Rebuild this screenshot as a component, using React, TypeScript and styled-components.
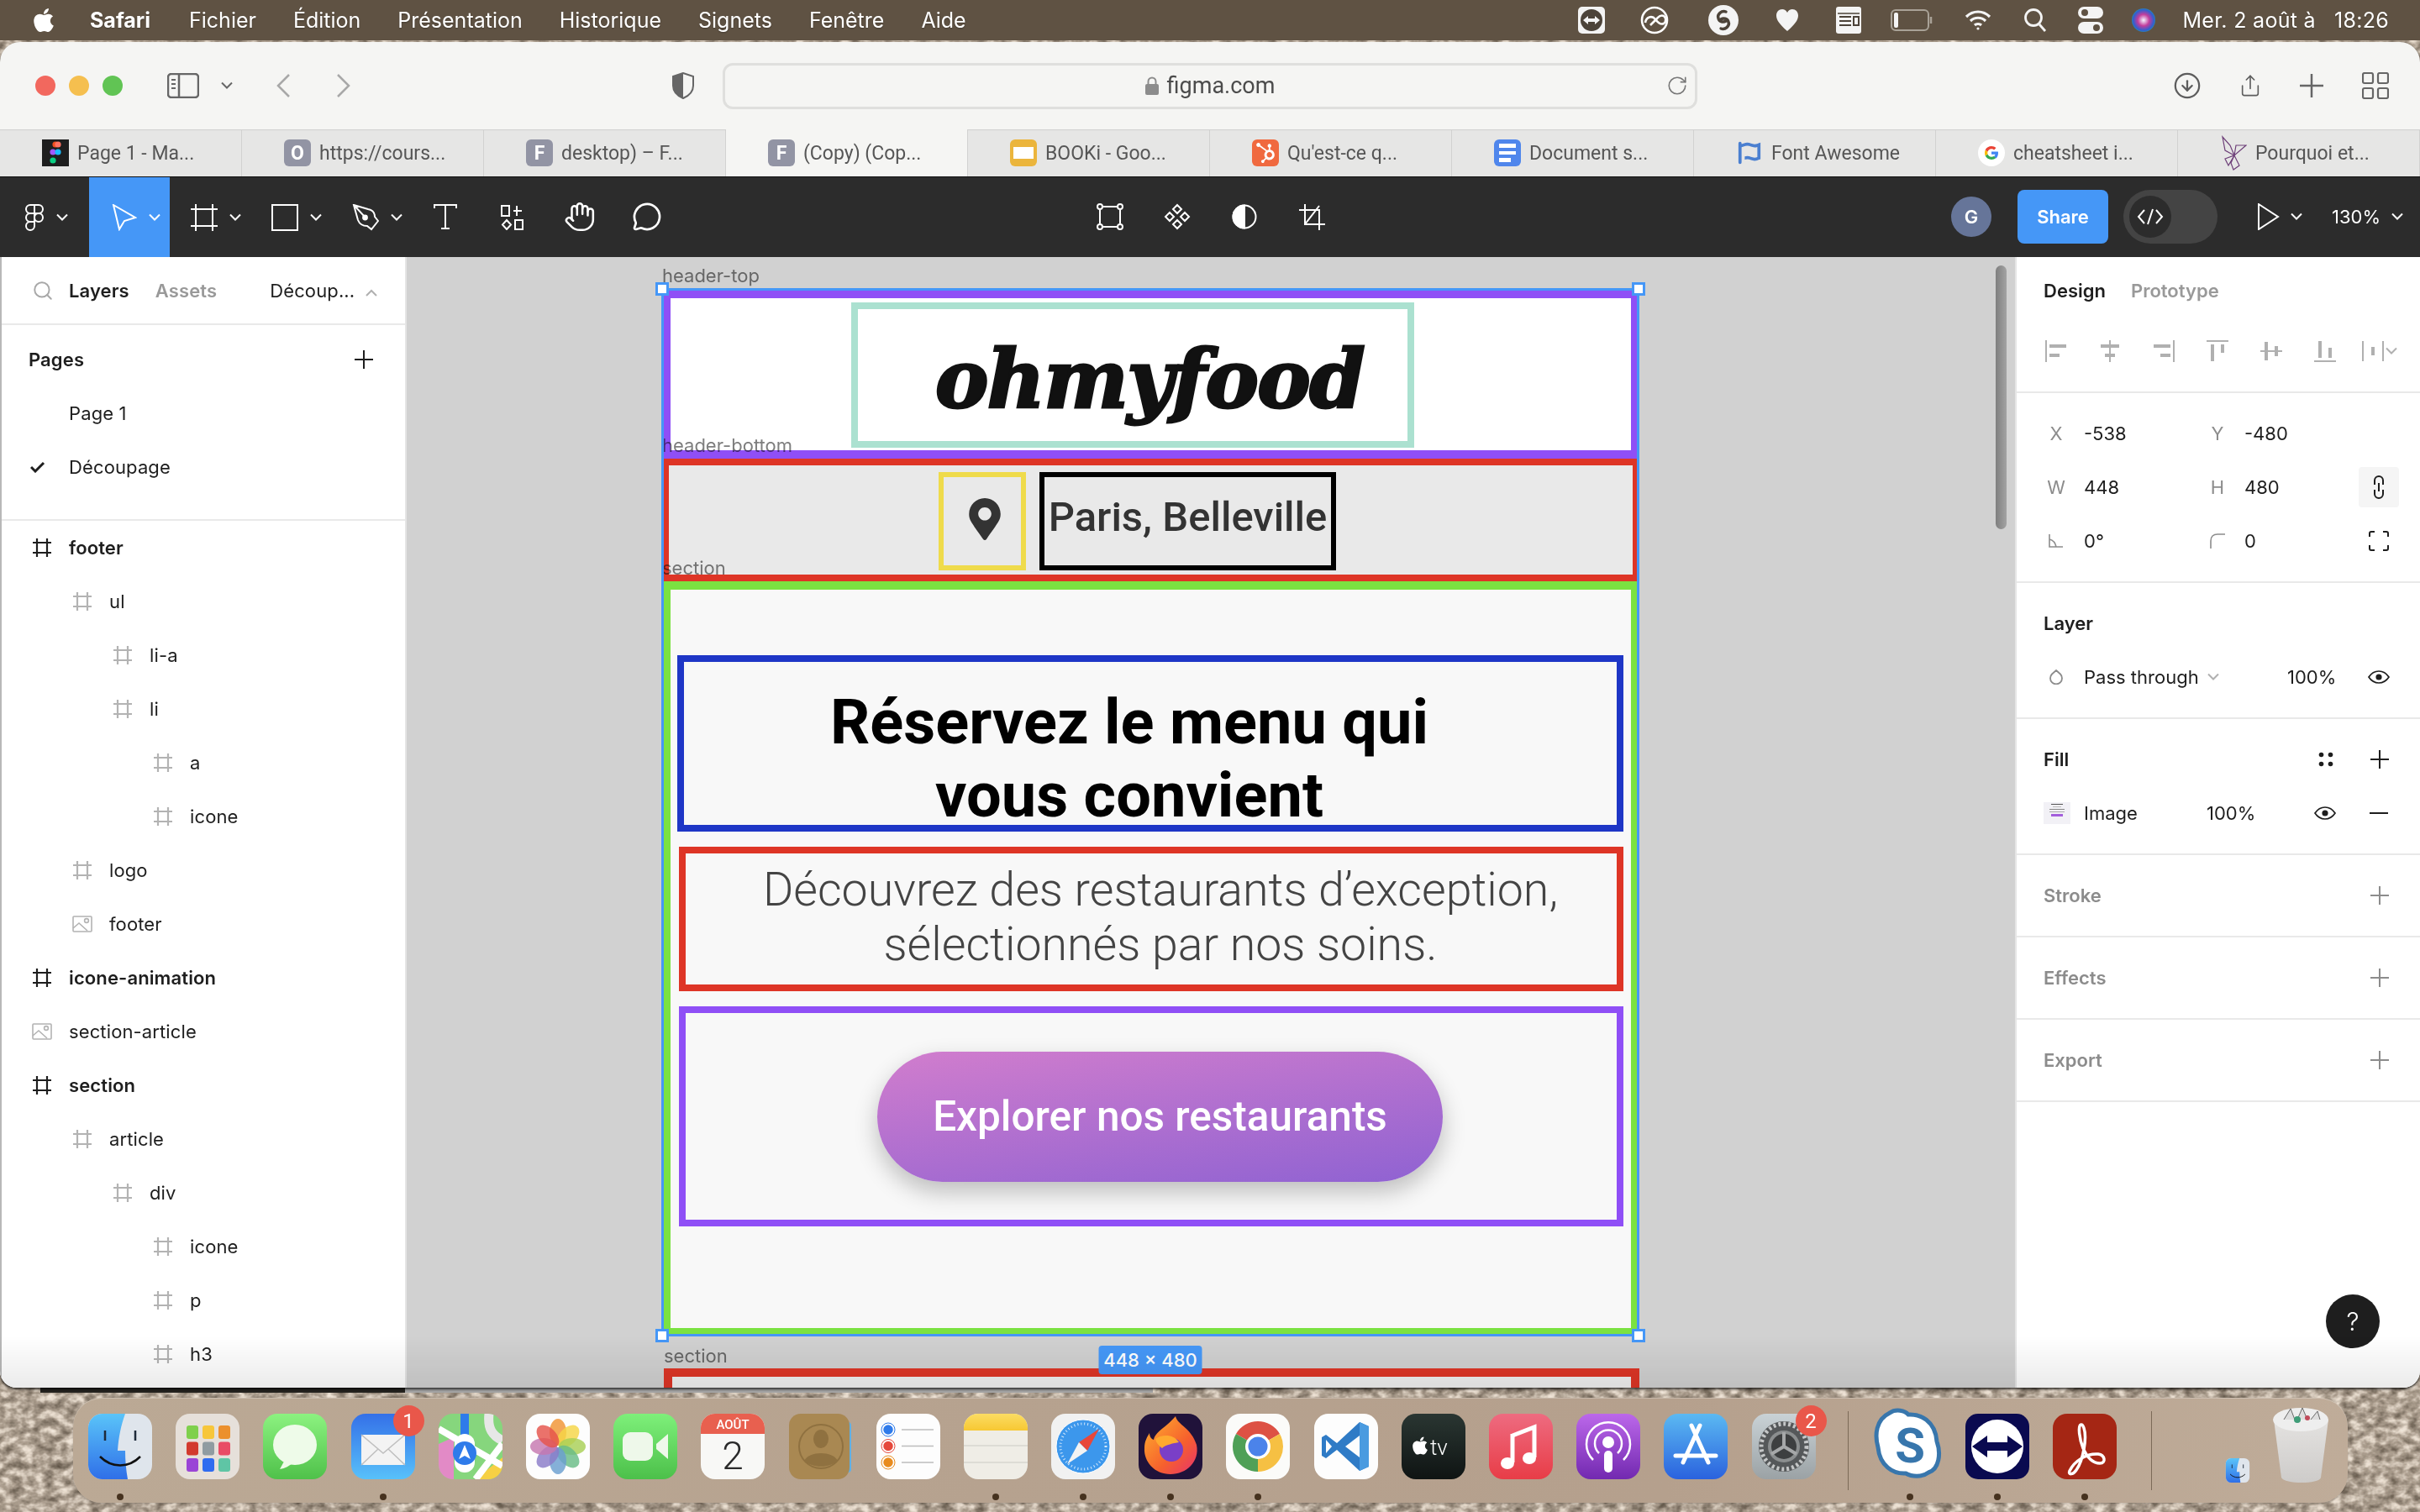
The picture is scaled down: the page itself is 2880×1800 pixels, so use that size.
import React from 'react';
import styled, { createGlobalStyle } from 'styled-components';
import { FaApple, FaFontAwesomeFlag, FaHubspot, FaMapMarkerAlt } from 'react-icons/fa';
import { CircleArrowDown, Hand, MessageCircle, RotateCw, Search, Share } from 'lucide-react';

const UI = `Inter, "Liberation Sans", sans-serif`;
const MAC = `Roboto, Inter, sans-serif`;

const GlobalStyle = createGlobalStyle`
  html, body { margin: 0; padding: 0; background: #8d7d6c; }
  * { box-sizing: border-box; }
`;

const Desktop = styled.div`
  position: relative;
  width: 2880px;
  height: 1800px;
  overflow: hidden;
  font-family: ${UI};
  display: flex;
  flex-direction: column;
`;

const Wallpaper = styled.svg`
  position: absolute;
  inset: 0;
`;

const BackWindow = styled.div`
  position: absolute;
  left: 48px;
  top: 1648px;
  width: 1324px;
  height: 10px;
  background: linear-gradient(90deg, #25231f 0 434px, #a4a4a4 434px);
`;

/* ---- menu bar ---- */
const MenuBar = styled.div`
  position: relative;
  height: 48px;
  flex: none;
  background: #5f5243;
  color: #fff;
  display: flex;
  align-items: center;
  padding: 0 37px 0 36px;
  font-family: ${UI};
  font-size: 25px;
  text-shadow: 0 1px 2px rgba(0, 0, 0, 0.3);
`;

const MenuItem = styled.span<{ $ml?: number; $bold?: boolean }>`
  margin-left: ${(p) => p.$ml ?? 44}px;
  font-weight: ${(p) => (p.$bold ? 700 : 400)};
  white-space: nowrap;
`;

const Clock = styled(MenuItem)`
  letter-spacing: 0.3px;
`;

const StatusItem = styled.span<{ $ml: number; $w: number }>`
  display: flex;
  align-items: center;
  justify-content: center;
  flex: none;
  width: ${(p) => p.$w}px;
  height: 48px;
  margin-left: ${(p) => p.$ml}px;
`;

const StatusGroup = styled.div`
  margin-left: auto;
  display: flex;
  align-items: center;
`;

/* ---- browser window ---- */
const Window = styled.div`
  position: relative;
  margin-top: 2px;
  height: 1602px;
  flex: none;
  border-radius: 24px 24px 20px 20px;
  overflow: hidden;
  background: #f5f5f3;
  display: flex;
  flex-direction: column;
  box-shadow: 0 2px 3px rgba(0, 0, 0, 0.7);
`;

const WindowFade = styled.div`
  position: absolute;
  left: 0;
  right: 0;
  bottom: 0;
  height: 62px;
  background: linear-gradient(rgba(0, 0, 0, 0), rgba(0, 0, 0, 0.08));
  pointer-events: none;
  z-index: 5;
`;

const SafariBar = styled.div`
  height: 104px;
  flex: none;
  display: flex;
  align-items: center;
  padding: 0 37px 0 42px;
`;

const Light = styled.span<{ $color: string; $ml?: number }>`
  width: 24px;
  height: 24px;
  border-radius: 50%;
  flex: none;
  margin-left: ${(p) => p.$ml ?? 0}px;
  background: ${(p) => p.$color};
`;

const BarIcon = styled.span<{ $ml: number; $w: number }>`
  display: flex;
  align-items: center;
  justify-content: center;
  flex: none;
  width: ${(p) => p.$w}px;
  margin-left: ${(p) => p.$ml}px;
  color: #5d5d5d;
`;

const UrlField = styled.div`
  position: relative;
  width: 1160px;
  height: 55px;
  margin-left: 34px;
  flex: none;
  border: 3px solid #dfdfdd;
  border-radius: 12px;
  display: flex;
  align-items: center;
  justify-content: center;
  gap: 10px;
  color: #4c4c4c;
  font-family: ${MAC};
  font-size: 27px;
`;

const Reload = styled.span`
  position: absolute;
  right: 8px;
  top: 11px;
  display: flex;
  color: #777;
`;

const TabStrip = styled.div`
  height: 56px;
  flex: none;
  display: flex;
  background: #e6e6e5;
  box-shadow: inset 0 2px 1px -1px #cfcfcf;
`;

const Tab = styled.div<{ $active?: boolean }>`
  width: 288px;
  flex: none;
  display: flex;
  align-items: center;
  padding-left: 50px;
  gap: 10px;
  border-right: 1px solid #d2d2d1;
  background: ${(p) => (p.$active ? '#f5f5f3' : 'transparent')};
  box-shadow: ${(p) => (p.$active ? '0 -2px 0 #f5f5f3' : 'none')};
  color: #565656;
  font-family: ${MAC};
  font-size: 23px;
  white-space: nowrap;
`;

const Favicon = styled.span<{ $bg: string; $color?: string }>`
  width: 32px;
  height: 32px;
  flex: none;
  border-radius: 6px;
  background: ${(p) => p.$bg};
  color: ${(p) => p.$color ?? '#fff'};
  display: flex;
  align-items: center;
  justify-content: center;
  font-family: ${MAC};
  font-weight: 700;
  font-size: 23px;
`;

/* ---- figma toolbar ---- */
const FigmaBar = styled.div`
  height: 96px;
  flex: none;
  background: #2c2c2c;
  border-top: 1px solid #111;
  padding-bottom: 1px;
  display: flex;
  align-items: stretch;
  color: #fff;
`;

const ToolMenu = styled.div<{ $active?: boolean; $w?: number; $gap?: number }>`
  width: ${(p) => p.$w ?? 96}px;
  flex: none;
  display: flex;
  align-items: center;
  padding-left: 25px;
  margin-bottom: -1px;
  gap: ${(p) => p.$gap ?? 14}px;
  background: ${(p) => (p.$active ? '#4597f7' : 'transparent')};
`;

const Tool = styled.div<{ $ml?: number }>`
  width: 80px;
  flex: none;
  display: flex;
  align-items: center;
  justify-content: center;
  margin-left: ${(p) => p.$ml ?? 0}px;
`;

const BarRight = styled.div`
  margin-left: auto;
  display: flex;
  align-items: center;
  padding-right: 20px;
`;

const Avatar = styled.span`
  width: 48px;
  height: 48px;
  border-radius: 50%;
  background: #667599;
  display: flex;
  align-items: center;
  justify-content: center;
  font-size: 22px;
  font-weight: 600;
`;

const ShareButton = styled.span`
  width: 108px;
  height: 64px;
  margin-left: 31px;
  border-radius: 8px;
  background: #4597f7;
  display: flex;
  align-items: center;
  justify-content: center;
  font-size: 22px;
  font-weight: 600;
`;

const CodeToggle = styled.span`
  width: 112px;
  height: 64px;
  margin-left: 18px;
  border-radius: 32px;
  background: #444;
  display: flex;
  align-items: center;
  padding-left: 7px;
`;

const CodeKnob = styled.span`
  width: 50px;
  height: 50px;
  border-radius: 50%;
  background: #2c2c2c;
  display: flex;
  align-items: center;
  justify-content: center;
`;

const ZoomText = styled.span`
  margin-left: 35px;
  margin-right: 13px;
  font-size: 22px;
`;

/* ---- figma panels ---- */
const Workspace = styled.div`
  flex: 1;
  display: flex;
  min-height: 0;
`;

const LeftPanel = styled.aside`
  width: 484px;
  flex: none;
  background: #fff;
  border-left: 2px solid #b8b8b8;
  border-right: 2px solid #e5e5e5;
  color: #1e1e1e;
  font-size: 22px;
  letter-spacing: 0.12px;
  overflow: hidden;
`;

const LeftTabs = styled.div`
  height: 81px;
  display: flex;
  align-items: center;
  padding-left: 36px;
  border-bottom: 2px solid #e9e9e9;
  font-weight: 600;
`;

const PanelTab = styled.span<{ $ml: number; $muted?: boolean; $thin?: boolean }>`
  margin-left: ${(p) => p.$ml}px;
  color: ${(p) => (p.$muted ? '#999' : '#1e1e1e')};
  font-weight: ${(p) => (p.$thin ? 400 : 600)};
  white-space: nowrap;
`;

const PagesBlock = styled.div`
  padding: 9px 0 30px;
  border-bottom: 2px solid #e9e9e9;
`;

const PagesTitle = styled.div`
  height: 64px;
  padding: 0 38px 0 32px;
  display: flex;
  align-items: center;
  justify-content: space-between;
  font-weight: 600;
`;

const PageRow = styled.div`
  height: 64px;
  padding-left: 34px;
  display: flex;
  align-items: center;
  gap: 28px;
`;

const CheckSlot = styled.span`
  width: 18px;
  display: flex;
`;

const LayerRow = styled.div<{ $depth: number; $strong?: boolean }>`
  height: 64px;
  padding-left: ${(p) => 36 + p.$depth * 48}px;
  display: flex;
  align-items: center;
  gap: 20px;
  font-weight: ${(p) => (p.$strong ? 600 : 400)};
  white-space: nowrap;
`;

const LayerIcon = styled.span`
  width: 24px;
  flex: none;
  display: flex;
  justify-content: center;
`;

const RightPanel = styled.aside`
  position: relative;
  flex: 1;
  background: #fff;
  border-left: 2px solid #e5e5e5;
  color: #1e1e1e;
  font-size: 22px;
`;

const RightTabs = styled.div`
  height: 80px;
  padding-left: 32px;
  display: flex;
  align-items: center;
  gap: 30px;
  font-weight: 600;
`;

const Section = styled.section<{ $pad?: boolean }>`
  padding: ${(p) => (p.$pad === false ? '0' : '16px 0')};
  border-bottom: 2px solid #e9e9e9;
`;

const AlignRow = styled.div`
  height: 64px;
  margin-top: -16px;
  padding-left: 15px;
  display: grid;
  grid-template-columns: repeat(7, 64px);
  align-items: center;
  justify-items: center;
`;

const PropRow = styled.div<{ $cols: string }>`
  height: 64px;
  padding-left: 32px;
  display: grid;
  grid-template-columns: ${(p) => p.$cols};
  align-items: center;
  font-size: 22px;
`;

const PropLabel = styled.span`
  width: 30px;
  display: flex;
  justify-content: center;
  color: #8c8c8c;
`;

const Cell = styled.span<{ $bg?: string }>`
  height: 48px;
  width: 48px;
  display: flex;
  align-items: center;
  justify-content: center;
  border-radius: 4px;
  background: ${(p) => p.$bg ?? 'transparent'};
`;

const Inline = styled.span<{ $gap?: number }>`
  display: flex;
  align-items: center;
  gap: ${(p) => p.$gap ?? 10}px;
  white-space: nowrap;
`;

const SectionTitle = styled.div<{ $muted?: boolean }>`
  height: 64px;
  padding: 0 24px 0 32px;
  display: flex;
  align-items: center;
  justify-content: space-between;
  font-weight: 600;
  color: ${(p) => (p.$muted ? '#8c8c8c' : '#1e1e1e')};
`;

const TitleIcons = styled.span`
  display: flex;
  gap: 16px;
`;

const CollapsedTitle = styled(SectionTitle)`
  height: 96px;
`;

const Thumb = styled.span`
  width: 32px;
  height: 26px;
  background: #f2f1f6;
  display: flex;
  flex-direction: column;
  align-items: center;
  gap: 2px;
  padding-top: 2px;
`;

const ThumbBar = styled.span<{ $w: number; $color: string; $h?: number }>`
  width: ${(p) => p.$w}px;
  height: ${(p) => p.$h ?? 1}px;
  background: ${(p) => p.$color};
`;

const HelpButton = styled.div`
  position: absolute;
  right: 48px;
  bottom: 47px;
  width: 64px;
  height: 64px;
  border-radius: 50%;
  background: #1e1e1e;
  color: #fff;
  font-size: 30px;
  font-weight: 300;
  display: flex;
  align-items: center;
  justify-content: center;
`;

/* ---- canvas ---- */
const Canvas = styled.main`
  position: relative;
  flex: none;
  width: 1914px;
  background: #d1d1d1;
  overflow: hidden;
`;

const ScrollThumb = styled.div`
  position: absolute;
  right: 10px;
  top: 10px;
  width: 13px;
  height: 314px;
  border-radius: 7px;
  background: linear-gradient(90deg, #7f7f7f, #a3a3a3);
`;

const Stack = styled.div`
  position: absolute;
  left: 304px;
  top: 39px;
  width: 1163px;
`;

const FrameSlot = styled.div<{ $mt?: number }>`
  position: relative;
  margin-top: ${(p) => p.$mt ?? 0}px;
`;

const FrameLabel = styled.span<{ $left?: number; $top?: number }>`
  position: absolute;
  left: ${(p) => p.$left ?? 0}px;
  top: ${(p) => p.$top ?? -29}px;
  z-index: 2;
  font-size: 22px;
  line-height: 26px;
  color: #7e7e7e;
  mix-blend-mode: multiply;
  white-space: nowrap;
`;

const Box = styled.div<{ $color: string; $w?: number; $h: number; $b: number; $bg?: string }>`
  width: ${(p) => (p.$w ? `${p.$w}px` : 'auto')};
  height: ${(p) => p.$h}px;
  border: ${(p) => p.$b}px solid ${(p) => p.$color};
  background: ${(p) => p.$bg ?? 'transparent'};
`;

const HeaderTop = styled(Box)`
  padding: 5px 0 0 215px;
`;

const LogoBox = styled(Box)`
  display: flex;
  align-items: center;
  justify-content: center;
  padding: 10px 0 0 40px;
`;

const Logo = styled.span`
  font-family: "DejaVu Serif", "Liberation Serif", serif;
  font-style: italic;
  font-weight: 700;
  font-size: 95px;
  letter-spacing: -1.5px;
  color: #111;
  -webkit-text-stroke: 3px #111;
  line-height: 1;
`;

const HeaderBottom = styled(Box)`
  padding: 8px 0 0 321px;
  display: flex;
  gap: 16px;
`;

const PinBox = styled(Box)`
  display: flex;
  justify-content: center;
  padding: 25px 0 0 6px;
  color: #333;
`;

const CityBox = styled(Box)`
  display: flex;
  justify-content: center;
  font-family: Roboto, sans-serif;
  font-weight: 500;
  font-size: 49px;
  line-height: 96px;
  color: #333;
  white-space: nowrap;
`;

const SectionFrame = styled(Box)`
  padding: 78px 9px 0 10px;
  display: flex;
  flex-direction: column;
  gap: 18px;
`;

const Heading = styled(Box)`
  margin-left: -2px;
  padding: 28px 50px 0 0;
  text-align: center;
  font-family: Roboto, sans-serif;
  font-weight: 700;
  font-size: 74px;
  line-height: 87px;
  color: #000;
`;

const Lead = styled(Box)`
  padding: 11px 0 0 22px;
  text-align: center;
  font-family: Roboto, sans-serif;
  font-weight: 300;
  font-size: 55.5px;
  line-height: 65px;
  color: #444;
`;

const CtaBox = styled(Box)`
  display: flex;
  align-items: center;
  justify-content: center;
  padding-left: 21px;
`;

const Cta = styled.div`
  width: 673px;
  height: 155px;
  border-radius: 78px;
  background: linear-gradient(172deg, #d17dcd, #8f62d2);
  box-shadow: 0 12px 28px rgba(0, 0, 0, 0.24);
  display: flex;
  align-items: center;
  justify-content: center;
  font-family: Roboto, sans-serif;
  font-weight: 500;
  font-size: 49.5px;
  color: #fff;
  white-space: nowrap;
`;

const NextFrame = styled(Box)`
  margin-left: 2px;
`;

const Selection = styled.div`
  position: absolute;
  left: -1px;
  top: -2px;
  width: 1164px;
  height: 1248px;
  border: 3px solid #4597f7;
  z-index: 3;
  pointer-events: none;
`;

const Handle = styled.span<{ $x: 'left' | 'right'; $y: 'top' | 'bottom' }>`
  position: absolute;
  ${(p) => p.$x}: -10px;
  ${(p) => p.$y}: -10px;
  width: 16px;
  height: 16px;
  background: #fff;
  border: 3px solid #4597f7;
`;

const SizeBadge = styled.span`
  position: absolute;
  left: 50%;
  bottom: -48px;
  transform: translateX(-50%);
  width: 123px;
  height: 34px;
  border-radius: 4px;
  background: #4597f7;
  color: #fff;
  font-size: 22px;
  font-weight: 500;
  display: flex;
  align-items: center;
  justify-content: center;
  white-space: nowrap;
`;

/* ---- dock ---- */
const Dock = styled.div`
  position: relative;
  margin: 12px 0 0 87px;
  width: 2707px;
  height: 125px;
  border-radius: 34px;
  background: linear-gradient(90deg, #bba995, #b6a28f 40%, #b5a08d 70%, #bfac99);
  box-shadow: inset 0 1px 0 rgba(255, 255, 255, 0.25), 0 1px 2px rgba(0, 0, 0, 0.15);
  padding: 19px 0 0 18px;
  display: flex;
  align-items: flex-start;
  gap: 28.2px;
`;

const DockItem = styled.div<{ $mt?: number; $w?: number; $ml?: number }>`
  position: relative;
  width: ${(p) => p.$w ?? 76}px;
  flex: none;
  margin-top: ${(p) => p.$mt ?? 0}px;
  margin-left: ${(p) => p.$ml ?? 0}px;
  display: flex;
  flex-direction: column;
  align-items: center;
`;

const DockDot = styled.span`
  width: 8px;
  height: 8px;
  border-radius: 50%;
  background: #46321f;
  margin-top: 17px;
`;

const DockBadge = styled.span<{ $left: number }>`
  position: absolute;
  left: ${(p) => p.$left}px;
  top: -10px;
  width: 37px;
  height: 37px;
  border-radius: 50%;
  background: #e9574a;
  color: #fff;
  font-family: ${MAC};
  font-size: 24px;
  display: flex;
  align-items: center;
  justify-content: center;
`;

const DockSeparator = styled.span<{ $ml: number; $mr: number }>`
  width: 1px;
  height: 94px;
  flex: none;
  margin: -3px ${(p) => p.$mr}px 0 ${(p) => p.$ml}px;
  background: #7c6a58;
`;

/* ---- icons ---- */
type SvgProps = { size?: number; color?: string; children?: React.ReactNode };

const Line = ({ size = 32, color = '#fff', children }: SvgProps) => (
  <svg width={size} height={size} viewBox="0 0 32 32" fill="none" stroke={color} strokeWidth={2}>
    {children}
  </svg>
);

const Chevron = ({ color = '#fff' }: { color?: string }) => (
  <svg width="14" height="10" viewBox="0 0 14 10" fill="none" stroke={color} strokeWidth="2">
    <path d="M1 1.5l6 6 6-6" />
  </svg>
);

const FrameIcon = ({ color }: { color: string }) => (
  <svg width="22" height="22" viewBox="0 0 22 22" fill="none" stroke={color} strokeWidth="2.2">
    <path d="M0 5h22M0 17h22M5 0v22M17 0v22" />
  </svg>
);

const ImageIcon = () => (
  <svg width="24" height="20" viewBox="0 0 24 20" fill="none" stroke="#b3b3b3" strokeWidth="1.6">
    <rect x="1" y="1" width="22" height="18" rx="1" />
    <path d="M1 15l7-6 10 9" />
    <circle cx="17" cy="6" r="2.4" />
  </svg>
);

const PlusIcon = ({ color = '#1e1e1e' }: { color?: string }) => (
  <svg width="22" height="22" viewBox="0 0 22 22" fill="none" stroke={color} strokeWidth="2">
    <path d="M0 11h22M11 0v22" />
  </svg>
);

const EyeIcon = () => (
  <svg width="26" height="16" viewBox="0 0 26 16" fill="none" stroke="#1e1e1e" strokeWidth="1.7">
    <path d="M1 8c3-4.5 7.2-7 12-7s9 2.5 12 7c-3 4.5-7.2 7-12 7S4 12.5 1 8z" />
    <circle cx="13" cy="8" r="3.6" fill="#1e1e1e" stroke="none" />
  </svg>
);

const AlignIcon = ({ axis, bars }: { axis: string; bars: string }) => (
  <svg width="28" height="28" viewBox="0 0 28 28" fill="none" stroke="#b0b0b0">
    <path d={axis} strokeWidth="2" />
    <path d={bars} strokeWidth="4" />
  </svg>
);

const alignPaths = [
  { axis: 'M2 1v26', bars: 'M6 8h20M6 19h12' },
  { axis: 'M14 1v26', bars: 'M3 8h22M8 19h12' },
  { axis: 'M26 1v26', bars: 'M2 8h20M10 19h12' },
  { axis: 'M1 2h26', bars: 'M8 6v20M20 6v10' },
  { axis: 'M1 14h26', bars: 'M8 3v22M20 8v12' },
  { axis: 'M1 26h26', bars: 'M8 2v20M20 10v12' },
];

const MiniFavicon = () => (
  <svg width="32" height="32" viewBox="0 0 32 32">
    <rect width="32" height="32" fill="#1e1e1e" />
    <circle cx="16" cy="6" r="3.6" fill="#f24e1e" />
    <circle cx="19" cy="6" r="3.6" fill="#ff7262" />
    <circle cx="13" cy="15" r="3.6" fill="#a259ff" />
    <circle cx="19" cy="15" r="3.6" fill="#1abcfe" />
    <circle cx="13" cy="25" r="3.6" fill="#0acf83" />
  </svg>
);

const GoogleG = () => (
  <svg width="32" height="32" viewBox="0 0 32 32">
    <circle cx="16" cy="16" r="16" fill="#fff" />
    <path d="M24 16.2c0-.6 0-1.2-.2-1.7H16v3.3h4.5c-.2 1-.8 1.9-1.7 2.5l2.7 2.1c1.6-1.5 2.5-3.6 2.5-6.2z" fill="#4285f4" />
    <path d="M16 24c2.2 0 4-.7 5.4-2l-2.7-2c-.7.5-1.6.8-2.7.8-2.1 0-3.9-1.4-4.5-3.3L8.7 19.6C10 22.2 12.8 24 16 24z" fill="#34a853" />
    <path d="M11.5 17.5c-.3-1-.3-2 0-3L8.700 12.400c-1 2.200-1 4.900 0 7.200z" fill="#fbbc05" />
    <path d="M16 11.200c1.200 0 2.300.4 3.100 1.200l2.400-2.400C20.100 8.700 18.200 8 16 8c-3.200 0-6 1.800-7.300 4.400l2.800 2.100c.6-1.900 2.400-3.300 4.500-3.300z" fill="#ea4335" />
  </svg>
);

const Butterfly = () => (
  <svg width="32" height="42" viewBox="0 0 32 42" fill="none" stroke="#6d3f78" strokeWidth="1.2">
    <path d="M3 2l9 10 5 12-11-6zM3 2l3 16M31 12l-14 12 2-12zM6 28l11-4-7 12zM17 24l6 12-7 5-3-8z" />
  </svg>
);

const Tile = ({ children, w = 76, h = 78 }: { children: React.ReactNode; w?: number; h?: number }) => (
  <svg width={w} height={h} viewBox="0 0 76 78" style={{ overflow: 'visible', display: 'block' }}>
    {children}
  </svg>
);

const Grad = ({ id, a, b }: { id: string; a: string; b: string }) => (
  <linearGradient id={id} x1="0" y1="0" x2="0" y2="1">
    <stop offset="0" stopColor={a} />
    <stop offset="1" stopColor={b} />
  </linearGradient>
);

const Finder = ({ w, h, id = 'fnd' }: { w?: number; h?: number; id?: string }) => (
  <Tile w={w} h={h}>
    <defs>
      <Grad id={id} a="#5ac4f9" b="#2f6fe8" />
    </defs>
    <rect width="76" height="78" rx="17" fill="#dfe5ec" />
    <path d="M17 0h27c-5 14-8 28-9 44h9c0 12 1 23 3 34H17A17 17 0 0 1 0 61V17A17 17 0 0 1 17 0z" fill={`url(#${id})`} />
    <path d="M20 20v12M56 20v12" stroke="#1e2a3a" strokeWidth="2.500" />
    <path d="M14 51c14 14 34 14 48 0" fill="none" stroke="#111" strokeWidth="2.500" />
  </Tile>
);

const Launchpad = () => {
  const colors = ['#7fd04c', '#f7c63a', '#ec902d', '#d23a2e', '#909ca1', '#e94c65', '#9a44d6', '#2f6cf0', '#5fc5a5'];
  return (
    <Tile>
      <rect width="76" height="78" rx="17" fill="#e6e0da" />
      {colors.map((c, i) => (
        <rect key={c} x={13 + (i % 3) * 19} y={14 + Math.floor(i / 3) * 19.500} width="14" height="16" rx="3" fill={c} />
      ))}
    </Tile>
  );
};

const Messages = () => (
  <Tile>
    <defs>
      <Grad id="msg" a="#8cf280" b="#4fc14a" />
    </defs>
    <rect width="76" height="78" rx="17" fill="url(#msg)" />
    <ellipse cx="38" cy="37" rx="26" ry="24" fill="#eefbe9" />
    <path d="M26 55l-6 11c6-1 12-4 16-8z" fill="#eefbe9" />
  </Tile>
);

const Mail = () => (
  <Tile>
    <defs>
      <Grad id="mail" a="#3470e8" b="#58c1fa" />
    </defs>
    <rect width="76" height="78" rx="17" fill="url(#mail)" />
    <rect x="12" y="25" width="52" height="36" rx="3" fill="#f3f3f3" />
    <path d="M12 25l26 22 26-22M12 61l20-19M64 61L44 42" fill="none" stroke="#bfbfbf" strokeWidth="1.500" />
  </Tile>
);

const Maps = () => (
  <Tile>
    <defs>
      <clipPath id="mapc">
        <rect width="76" height="78" rx="17" />
      </clipPath>
    </defs>
    <g clipPath="url(#mapc)">
      <rect width="76" height="78" fill="#86d67d" />
      <path d="M0 36l18-8v50H0z" fill="#e28ac6" />
      <path d="M44 78l32-26v26z" fill="#f6d044" />
      <path d="M60 0c-2 18 4 26 16 32" fill="none" stroke="#e7e7e7" strokeWidth="11" />
      <path d="M0 18l76 44M76 36L44 78" stroke="#fff" strokeWidth="8" />
      <rect x="26" y="0" width="10" height="30" fill="#2e7bea" />
      <rect x="19" y="24" width="24" height="46" rx="12" fill="#fff" />
      <circle cx="31" cy="47" r="14" fill="#2f7bea" />
      <path d="M31 37l7 17-7-4-7 4z" fill="#fff" />
    </g>
  </Tile>
);

const Photos = () => {
  const petals = ['#f09433', '#f5d545', '#a8cf55', '#69bc86', '#6a9fd0', '#8a7bc8', '#c678b0', '#e5534b'];
  return (
    <Tile>
      <rect width="76" height="78" rx="17" fill="#fdfdfd" />
      {petals.map((c, i) => (
        <ellipse key={c} cx="38" cy="22" rx="10" ry="16" fill={c} opacity="0.82" transform={`rotate(${i * 45} 38 39)`} />
      ))}
    </Tile>
  );
};

const FaceTime = () => (
  <Tile>
    <defs>
      <Grad id="ft" a="#7ef07a" b="#4cc04a" />
    </defs>
    <rect width="76" height="78" rx="17" fill="url(#ft)" />
    <rect x="11" y="22" width="36" height="34" rx="9" fill="#eef8ea" />
    <path d="M51 36l14-12v30L51 42z" fill="#eef8ea" />
  </Tile>
);

const Calendar = () => (
  <Tile>
    <defs>
      <clipPath id="calc">
        <rect width="76" height="78" rx="17" />
      </clipPath>
    </defs>
    <g clipPath="url(#calc)">
      <rect width="76" height="78" fill="#f8f8f6" />
      <rect width="76" height="24" fill="#e8604f" />
    </g>
    <text x="38" y="18" textAnchor="middle" fill="#fff" fontSize="15" fontFamily="Roboto, sans-serif" fontWeight="500">AOÛT</text>
    <text x="38" y="66" textAnchor="middle" fill="#2a2a2a" fontSize="46" fontFamily="Roboto, sans-serif" fontWeight="300">2</text>
  </Tile>
);

const Contacts = () => (
  <Tile>
    <rect x="60" y="10" width="14" height="60" rx="4" fill="#5fb0e6" />
    <rect width="72" height="78" rx="14" fill="#a98852" />
    <circle cx="38" cy="39" r="26" fill="none" stroke="#8f7140" strokeWidth="2" />
    <ellipse cx="38" cy="30" rx="9" ry="11" fill="#8f7140" />
    <path d="M18 56c6-12 34-12 40 0-10 9-30 9-40 0z" fill="#8f7140" />
  </Tile>
);

const Reminders = () => (
  <Tile>
    <rect width="76" height="78" rx="17" fill="#fdfdfd" />
    {['#2f7bea', '#e5483b', '#e88b1e'].map((c, i) => (
      <React.Fragment key={c}>
        <circle cx="14" cy={19 + i * 19.500} r="6.500" fill={c} stroke="#fff" strokeWidth="1.500" />
        <circle cx="14" cy={19 + i * 19.500} r="8" fill="none" stroke={c} strokeWidth="1" />
        <path d={`M30 ${19 + i * 19.500}h38`} stroke="#bdbdbd" strokeWidth="1.500" />
      </React.Fragment>
    ))}
  </Tile>
);

const Notes = () => (
  <Tile>
    <defs>
      <clipPath id="nc">
        <rect width="76" height="78" rx="17" />
      </clipPath>
      <Grad id="ny" a="#fbdc63" b="#f7c833" />
    </defs>
    <g clipPath="url(#nc)">
      <rect width="76" height="78" fill="#efede6" />
      <rect width="76" height="20" fill="url(#ny)" />
      <path d="M0 38h76M0 58h76" stroke="#d8d6cf" strokeWidth="1.500" />
    </g>
  </Tile>
);

const Safari = () => (
  <Tile>
    <rect width="76" height="78" rx="17" fill="#f1f1f1" />
    <circle cx="38" cy="39" r="32" fill="#3c97ec" stroke="#fff" strokeWidth="1" />
    <circle cx="38" cy="39" r="27" fill="none" stroke="#d5e9fb" strokeWidth="3" strokeDasharray="1 3" />
    <path d="M57 18L33 34l10 10z" fill="#e8473a" />
    <path d="M19 60l24-16-10-10z" fill="#f3f3f3" />
  </Tile>
);

const Firefox = () => (
  <Tile>
    <defs>
      <linearGradient id="fx" x1="0" y1="0" x2="1" y2="1">
        <stop offset="0" stopColor="#ffb32e" />
        <stop offset="0.6" stopColor="#f6602d" />
        <stop offset="1" stopColor="#e7326f" />
      </linearGradient>
    </defs>
    <rect width="76" height="78" rx="17" fill="#20123a" />
    <path d="M44 3c2 10 19 14 25 34 4 20-12 35-31 35C19 72 6 57 7 41c0-8 3-13 6-18 0 4 2 7 5 8 2-10 14-14 26-28z" fill="url(#fx)" />
    <circle cx="39" cy="43" r="14" fill="#7a3fc7" />
    <path d="M20 30c8-6 22-6 28 4-6 1-16 3-20 7-4-3-7-6-8-11z" fill="#ffa92f" />
  </Tile>
);

const Chrome = () => (
  <Tile>
    <rect width="76" height="78" rx="17" fill="#fbfbf9" />
    <path d="M38 39L12 24A30 30 0 0 1 64 24Z" fill="#dd5144" />
    <path d="M38 39L64 24A30 30 0 0 1 38 69Z" fill="#f6c043" />
    <path d="M38 39L38 69A30 30 0 0 1 12 24Z" fill="#4fa057" />
    <circle cx="38" cy="39" r="15" fill="#fff" />
    <circle cx="38" cy="39" r="11.500" fill="#4b83ea" />
  </Tile>
);

const VsCode = () => (
  <Tile>
    <rect width="76" height="78" rx="17" fill="#fdfdfd" />
    <path d="M54 10l11 5v48l-11 5-27-25-13 10-5-3v-22l5-3 13 10z" fill="#2f7bc6" />
    <path d="M54 10l11 5v48l-11 5z" fill="#4a9be0" />
    <path d="M54 26v26L37 39z" fill="#fdfdfd" />
    <path d="M14 31v16l7-8z" fill="#fdfdfd" />
  </Tile>
);

const AppleTv = () => (
  <Tile>
    <defs>
      <Grad id="atv" a="#2a3632" b="#0f1413" />
    </defs>
    <rect width="76" height="78" rx="17" fill="url(#atv)" />
    <foreignObject x="10" y="26" width="24" height="26">
      <FaApple size={24} color="#fff" />
    </foreignObject>
    <text x="34" y="49" fill="#fff" fontSize="26" fontFamily="Roboto, sans-serif" fontWeight="300">tv</text>
  </Tile>
);

const Music = () => (
  <Tile>
    <defs>
      <Grad id="mus" a="#ee6b80" b="#e83d47" />
    </defs>
    <rect width="76" height="78" rx="17" fill="url(#mus)" />
    <path d="M28 26l26-10v36" fill="none" stroke="#fff" strokeWidth="5" />
    <path d="M28 24v34" stroke="#fff" strokeWidth="5" />
    <ellipse cx="22" cy="59" rx="8" ry="7" fill="#fff" />
    <ellipse cx="48" cy="53" rx="8" ry="7" fill="#fff" />
  </Tile>
);

const Podcasts = () => (
  <Tile>
    <defs>
      <Grad id="pod" a="#bc68ea" b="#7229b0" />
    </defs>
    <rect width="76" height="78" rx="17" fill="url(#pod)" />
    <g fill="none" stroke="#fff" strokeWidth="2.500">
      <path d="M20 55a26 26 0 1 1 36 0" />
      <path d="M27 47a16 16 0 1 1 22 0" />
    </g>
    <circle cx="38" cy="34" r="7" fill="#fff" />
    <rect x="33" y="44" width="10" height="26" rx="5" fill="#fff" />
  </Tile>
);

const AppStore = () => (
  <Tile>
    <defs>
      <Grad id="aps" a="#5bb9f2" b="#2a62de" />
    </defs>
    <rect width="76" height="78" rx="17" fill="url(#aps)" />
    <g fill="none" stroke="#fff" strokeWidth="5" strokeLinecap="round">
      <path d="M33 14l20 44M43 14L23 58M14 50h48" />
    </g>
  </Tile>
);

const SystemPrefs = () => (
  <Tile>
    <defs>
      <Grad id="sys" a="#c9d2d6" b="#9ba2a5" />
    </defs>
    <rect width="76" height="78" rx="17" fill="url(#sys)" />
    <circle cx="38" cy="39" r="30" fill="#55585a" />
    <circle cx="38" cy="39" r="27" fill="none" stroke="#c5c7c8" strokeWidth="5" strokeDasharray="3 3" />
    <circle cx="38" cy="39" r="19" fill="#8b8e8f" />
    <circle cx="38" cy="39" r="15" fill="#3d3f40" />
    <path d="M38 39V22M38 39L23 48M38 39l15 9" stroke="#a6a8a9" strokeWidth="4" />
  </Tile>
);

const Skype = () => (
  <Tile>
    <path d="M14 -1c7-5 18-3 22 2 14-1 32 7 34 32 5 14 3 33-10 37-8 6-20 5-27 1-15 1-31-9-33-31C-4 26-3 7 14 -1z" fill="#fff" stroke="#3876ac" strokeWidth="5" />
    <text x="38" y="58" textAnchor="middle" fill="#3876ac" fontSize="58" fontFamily="Roboto, sans-serif" fontWeight="700">S</text>
  </Tile>
);

const TeamViewer = () => (
  <Tile>
    <rect width="76" height="78" rx="15" fill="#0a0a50" />
    <ellipse cx="38" cy="39" rx="31" ry="32" fill="#fff" />
    <path d="M8 39l18-13v8h24v-8l18 13-18 13v-8H26v8z" fill="#0a0a50" />
  </Tile>
);

const Acrobat = () => (
  <Tile>
    <rect width="76" height="78" rx="17" fill="#a52614" />
    <path d="M34 13c-5 0-2 18 2 28 4 9 10 18 20 18 8 0 6-10-2-11-14-1-28 8-34 20-2 5 4 5 8-1 8-11 13-38 9-50-1-3-2-4-3-4z" fill="none" stroke="#fff" strokeWidth="3.500" />
  </Tile>
);

const Trash = () => (
  <svg width="69" height="89" viewBox="0 0 69 89">
    <defs>
      <Grad id="tr" a="#e8e8e8" b="#cfcfcf" />
    </defs>
    <path d="M2 14h65l-9 69c-1 4-12 6-23 6s-22-2-24-6z" fill="url(#tr)" opacity="0.9" />
    <ellipse cx="34" cy="14" rx="33" ry="14" fill="#eeeeee" />
    <path d="M14 14l8-13 5 13M30 14L36 0l6 14M46 14l8-10 3 10" fill="#dedede" stroke="#6a6a6a" strokeWidth="1" />
    <circle cx="30" cy="14" r="4" fill="#3f9d78" />
    <circle cx="42" cy="12" r="3" fill="#c04a5a" />
  </svg>
);

const layers = [
  { name: 'footer', depth: 0, strong: true },
  { name: 'ul', depth: 1 },
  { name: 'li-a', depth: 2 },
  { name: 'li', depth: 2 },
  { name: 'a', depth: 3 },
  { name: 'icone', depth: 3 },
  { name: 'logo', depth: 1 },
  { name: 'footer', depth: 1, image: true },
  { name: 'icone-animation', depth: 0, strong: true },
  { name: 'section-article', depth: 0, image: true },
  { name: 'section', depth: 0, strong: true },
  { name: 'article', depth: 1 },
  { name: 'div', depth: 2 },
  { name: 'icone', depth: 3 },
  { name: 'p', depth: 3 },
  { name: 'h3', depth: 3 },
];

const gray = <Favicon $bg="#9294a4">F</Favicon>;

const tabs: { label: string; icon: React.ReactNode; active?: boolean }[] = [
  { label: 'Page 1 - Ma...', icon: <Favicon $bg="#1e1e1e"><MiniFavicon /></Favicon> },
  { label: 'https://cours...', icon: <Favicon $bg="#9294a4">O</Favicon> },
  { label: 'desktop) – F...', icon: gray },
  { label: '(Copy) (Cop...', icon: gray, active: true },
  { label: 'BOOKi - Goo...', icon: <Favicon $bg="#ebb53c"><ThumbBar $w={24} $h={14} $color="#fff" /></Favicon> },
  { label: "Qu'est-ce q...", icon: <Favicon $bg="#f0693f"><FaHubspot size={24} color="#fff" /></Favicon> },
  {
    label: 'Document s...',
    icon: (
      <Favicon $bg="#4f86ec">
        <svg width="20" height="26" viewBox="0 0 20 26" fill="#fff"><path d="M0 2h20v5H0zM0 11h20v4H0zM0 19h14v5H0z" /></svg>
      </Favicon>
    ),
  },
  { label: 'Font Awesome', icon: <Favicon $bg="transparent" $color="#4a7fd0"><FaFontAwesomeFlag size={30} /></Favicon> },
  { label: 'cheatsheet i...', icon: <Favicon $bg="transparent"><GoogleG /></Favicon> },
  { label: 'Pourquoi et...', icon: <Favicon $bg="transparent"><Butterfly /></Favicon> },
];

const dockApps: { el: React.ReactNode; dot?: boolean; badge?: string; badgeLeft?: number }[] = [
  { el: <Finder />, dot: true },
  { el: <Launchpad /> },
  { el: <Messages /> },
  { el: <Mail />, dot: true, badge: '1', badgeLeft: 50 },
  { el: <Maps /> },
  { el: <Photos /> },
  { el: <FaceTime /> },
  { el: <Calendar /> },
  { el: <Contacts /> },
  { el: <Reminders /> },
  { el: <Notes />, dot: true },
  { el: <Safari />, dot: true },
  { el: <Firefox />, dot: true },
  { el: <Chrome />, dot: true },
  { el: <VsCode /> },
  { el: <AppleTv /> },
  { el: <Music /> },
  { el: <Podcasts /> },
  { el: <AppStore /> },
  { el: <SystemPrefs />, badge: '2', badgeLeft: 52 },
];

const menus = ['Fichier', 'Édition', 'Présentation', 'Historique', 'Signets', 'Fenêtre', 'Aide'];

export default function App() {
  return (
    <>
      <GlobalStyle />
      <Desktop>
        <Wallpaper width="2880" height="1800">
          <filter id="grain" x="0" y="0" width="100%" height="100%">
            <feTurbulence type="fractalNoise" baseFrequency="0.075 0.1" numOctaves="3" seed="11" />
            <feColorMatrix type="matrix" values="1 0 0 0 0 1 0 0 0 0 1 0 0 0 0 0 0 0 0 1" />
            <feComponentTransfer>
              <feFuncR type="table" tableValues="0.08 0.2 0.42 0.8 0.95" />
              <feFuncG type="table" tableValues="0.06 0.16 0.35 0.71 0.88" />
              <feFuncB type="table" tableValues="0.04 0.12 0.28 0.61 0.8" />
            </feComponentTransfer>
          </filter>
          <rect width="2880" height="1800" filter="url(#grain)" />
        </Wallpaper>
        <BackWindow />

        <MenuBar>
          <FaApple size={32} />
          <MenuItem $ml={39} $bold>Safari</MenuItem>
          {menus.map((m, i) => (
            <MenuItem key={m} $ml={i === 0 ? 46 : 44}>{m}</MenuItem>
          ))}
          <StatusGroup>
            <StatusItem $ml={0} $w={32}>
              <svg width="32" height="32" viewBox="0 0 32 32">
                <rect width="32" height="32" rx="5" fill="#f3f3f3" />
                <circle cx="16" cy="16" r="13" fill="#4c4339" />
                <path d="M6 16l6-5v3h8v-3l6 5-6 5v-3h-8v3z" fill="#f3f3f3" />
              </svg>
            </StatusItem>
            <StatusItem $ml={40} $w={38}>
              <svg width="38" height="34" viewBox="0 0 38 34" fill="none" stroke="#fff" strokeWidth="2.600">
                <circle cx="19" cy="17" r="15" />
                <path d="M8 20c1-7 8-9 12-4 3 4 6 7 10 5 3-2 3-7 0-9-4-2-6 1-8 3l-8 8" />
              </svg>
            </StatusItem>
            <StatusItem $ml={44} $w={38}>
              <svg width="38" height="38" viewBox="0 0 38 38">
                <circle cx="19" cy="19" r="18" fill="#f4f4f4" />
                <path d="M22 9c-5-2-11 3-9 8 1 4 6 5 9 3M16 29c5 2 11-3 9-8-1-4-6-5-9-3" fill="none" stroke="#4c4339" strokeWidth="3.400" strokeLinecap="round" />
              </svg>
            </StatusItem>
            <StatusItem $ml={43} $w={28}>
              <svg width="28" height="28" viewBox="0 0 28 28" fill="#f4f4f4">
                <path d="M14 27C5 19 1 14 1 8.500 1 4 4 1 8 1c2.500 0 4.800 1.500 6 4 1.200-2.500 3.500-4 6-4 4 0 7 3 7 7.500C27 14 23 19 14 27z" />
              </svg>
            </StatusItem>
            <StatusItem $ml={44} $w={30}>
              <svg width="30" height="32" viewBox="0 0 30 32">
                <rect width="30" height="32" rx="3" fill="#f4f4f4" />
                <path d="M2 8h26" stroke="#4c4339" strokeWidth="1.500" />
                <path d="M4 12h14M4 17h14M4 22h14M21 12h6v10h-6z" stroke="#4c4339" strokeWidth="2" fill="none" />
              </svg>
            </StatusItem>
            <StatusItem $ml={35} $w={50}>
              <svg width="50" height="26" viewBox="0 0 50 26" fill="none">
                <rect x="1" y="1" width="44" height="24" rx="5" stroke="#a9a297" strokeWidth="2" />
                <rect x="4" y="4" width="5" height="18" rx="2" fill="#f4f4f4" />
                <path d="M48 9v8" stroke="#a9a297" strokeWidth="2.500" />
              </svg>
            </StatusItem>
            <StatusItem $ml={38} $w={32}>
              <svg width="32" height="26" viewBox="0 0 32 26" fill="none" stroke="#f4f4f4" strokeWidth="3.200">
                <path d="M2 9c8-8 20-8 28 0M7 14c5-5 13-5 18 0M12 19c2-2 6-2 8 0" />
                <circle cx="16" cy="23" r="1.600" fill="#f4f4f4" stroke="none" />
              </svg>
            </StatusItem>
            <StatusItem $ml={38} $w={28}>
              <svg width="28" height="30" viewBox="0 0 28 30" fill="none" stroke="#f4f4f4" strokeWidth="2.800">
                <circle cx="12" cy="12" r="9.500" />
                <path d="M19 20l7 8" />
              </svg>
            </StatusItem>
            <StatusItem $ml={37} $w={30}>
              <svg width="30" height="32" viewBox="0 0 30 32">
                <rect width="30" height="14" rx="7" fill="#f4f4f4" />
                <circle cx="8" cy="7" r="4" fill="#5f5243" />
                <rect y="18" width="30" height="14" rx="7" fill="#f4f4f4" />
                <circle cx="22" cy="25" r="4" fill="#5f5243" />
              </svg>
            </StatusItem>
            <StatusItem $ml={34} $w={28}>
              <svg width="28" height="28" viewBox="0 0 28 28">
                <defs>
                  <radialGradient id="siri" cx="0.5" cy="0.5" r="0.55">
                    <stop offset="0" stopColor="#f4f4ff" />
                    <stop offset="0.45" stopColor="#c23c9c" />
                    <stop offset="0.8" stopColor="#2f5fd0" />
                    <stop offset="1" stopColor="#2a9d9d" />
                  </radialGradient>
                </defs>
                <circle cx="14" cy="14" r="14" fill="url(#siri)" />
              </svg>
            </StatusItem>
            <Clock $ml={32}>Mer. 2 août à&nbsp;&nbsp;&nbsp;18:26</Clock>
          </StatusGroup>
        </MenuBar>

        <Window>
          <SafariBar>
            <Light $color="#f2685e" />
            <Light $color="#f5bf4f" $ml={16} />
            <Light $color="#61c454" $ml={16} />
            <BarIcon $ml={53} $w={38}>
              <svg width="38" height="30" viewBox="0 0 38 30" fill="none" stroke="#666" strokeWidth="2.500">
                <rect x="1" y="1" width="36" height="28" rx="4" />
                <path d="M14 1v28" />
                <path d="M5 8h5M5 13h5M5 18h5" strokeWidth="2" />
              </svg>
            </BarIcon>
            <BarIcon $ml={26} $w={14}><Chevron color="#666" /></BarIcon>
            <BarIcon $ml={51} $w={18}>
              <svg width="18" height="30" viewBox="0 0 18 30" fill="none" stroke="#a8a8a8" strokeWidth="2.500"><path d="M16 2L3 15l13 13" /></svg>
            </BarIcon>
            <BarIcon $ml={54} $w={18}>
              <svg width="18" height="30" viewBox="0 0 18 30" fill="none" stroke="#a8a8a8" strokeWidth="2.500"><path d="M2 2l13 13L2 28" /></svg>
            </BarIcon>
            <BarIcon $ml={382} $w={26}>
              <svg width="26" height="32" viewBox="0 0 26 32">
                <path d="M13 1L1 5v11c0 7 5 12 12 15 7-3 12-8 12-15V5z" fill="none" stroke="#666" strokeWidth="2" />
                <path d="M13 1L1 5v11c0 7 5 12 12 15z" fill="#666" />
              </svg>
            </BarIcon>
            <UrlField>
              <svg width="16" height="22" viewBox="0 0 16 22" fill="#8c8c8c">
                <rect y="9" width="16" height="13" rx="2" />
                <path d="M3.500 9V6a4.500 4.500 0 0 1 9 0v3" fill="none" stroke="#8c8c8c" strokeWidth="2" />
              </svg>
              figma.com
              <Reload><RotateCw size={26} strokeWidth={1.5} /></Reload>
            </UrlField>
            <BarIcon $ml={566} $w={34}><CircleArrowDown size={34} strokeWidth={1.6} /></BarIcon>
            <BarIcon $ml={44} $w={28}><Share size={40} strokeWidth={1.4} /></BarIcon>
            <BarIcon $ml={44} $w={30}>
              <svg width="30" height="30" viewBox="0 0 30 30" fill="none" stroke="#666" strokeWidth="2.500"><path d="M15 1v28M1 15h28" /></svg>
            </BarIcon>
            <BarIcon $ml={45} $w={32}>
              <svg width="32" height="32" viewBox="0 0 32 32" fill="none" stroke="#666" strokeWidth="2.200">
                <rect x="1" y="1" width="12" height="12" rx="2" />
                <rect x="19" y="1" width="12" height="12" rx="2" />
                <rect x="1" y="19" width="12" height="12" rx="2" />
                <rect x="19" y="19" width="12" height="12" rx="2" />
              </svg>
            </BarIcon>
          </SafariBar>

          <TabStrip>
            {tabs.map((t) => (
              <Tab key={t.label} $active={t.active}>
                {t.icon}
                {t.label}
              </Tab>
            ))}
          </TabStrip>

          <FigmaBar>
            <ToolMenu $w={106} $gap={10}>
              <Line>
                <g transform="translate(5 0)">
                  <path d="M11 1H6a5 5 0 0 0 0 10h5zM11 1h5a5 5 0 0 1 0 10h-5zM11 11H6a5 5 0 0 0 0 10h5zM11 21H6a5 5 0 1 0 5 5z" />
                  <circle cx="16" cy="16" r="5" />
                </g>
              </Line>
              <Chevron />
            </ToolMenu>
            <ToolMenu $active>
              <Line>
                <path d="M4 1l26 15-13 4-6 10z" />
              </Line>
              <Chevron />
            </ToolMenu>
            <ToolMenu>
              <Line>
                <path d="M0 6h32M0 26h32M6 0v32M26 0v32" />
              </Line>
              <Chevron />
            </ToolMenu>
            <ToolMenu>
              <Line>
                <rect x="1" y="1" width="30" height="30" />
              </Line>
              <Chevron />
            </ToolMenu>
            <ToolMenu>
              <Line>
                <path d="M2 1l17 5c5 1 8 4 8 9l4 5-8 10-5-4c-6 0-9-2-11-7zM2 1l13 14" />
                <circle cx="15.500" cy="16" r="2.400" fill="#fff" />
              </Line>
              <Chevron />
            </ToolMenu>
            <Tool>
              <Line>
                <path d="M3 6V2h26v4M16 2v28M11 30h10" />
              </Line>
            </Tool>
            <Tool>
              <Line>
                <path d="M3 3h9v12H3zM21 3v12M17 9h10M9 20l5 5.500L9 31l-5-5.500zM19 20h9v11h-9z" />
              </Line>
            </Tool>
            <Tool>
              <Hand size={38} strokeWidth={1.6} color="#fff" />
            </Tool>
            <Tool>
              <MessageCircle size={36} strokeWidth={1.8} color="#fff" />
            </Tool>
            <Tool $ml={471}>
              <Line>
                <path d="M8 4h16M8 28h16M4 8v16M28 8v16" />
                <circle cx="4" cy="4" r="3" />
                <circle cx="28" cy="4" r="3" />
                <circle cx="4" cy="28" r="3" />
                <circle cx="28" cy="28" r="3" />
              </Line>
            </Tool>
            <Tool>
              <Line>
                <path d="M16 2l5 5-5 5-5-5zM16 20l5 5-5 5-5-5zM7 11l5 5-5 5-5-5zM25 11l5 5-5 5-5-5z" />
              </Line>
            </Tool>
            <Tool>
              <Line>
                <circle cx="16" cy="16" r="13.500" />
                <path d="M16 2.500a13.500 13.500 0 0 0 0 27z" fill="#fff" />
              </Line>
            </Tool>
            <Tool>
              <Line>
                <path d="M8 1v24h24M1 8h24v24M25 3L8 25" />
              </Line>
            </Tool>
            <BarRight>
              <Avatar>G</Avatar>
              <ShareButton>Share</ShareButton>
              <CodeToggle>
                <CodeKnob>
                  <svg width="32" height="20" viewBox="0 0 32 20" fill="none" stroke="#fff" strokeWidth="2">
                    <path d="M9 2L2 10l7 8M23 2l7 8-7 8M19 1l-6 18" />
                  </svg>
                </CodeKnob>
              </CodeToggle>
              <BarIcon $ml={44} $w={32}>
                <Line>
                  <path d="M5 1l23 15L5 31z" />
                </Line>
              </BarIcon>
              <BarIcon $ml={11} $w={14}><Chevron /></BarIcon>
              <ZoomText>130%</ZoomText>
              <Chevron />
            </BarRight>
          </FigmaBar>

          <Workspace>
            <LeftPanel>
              <LeftTabs>
                <Search size={26} color="#a8a8a8" strokeWidth={1.8} />
                <PanelTab $ml={18}>Layers</PanelTab>
                <PanelTab $ml={31} $muted>Assets</PanelTab>
                <PanelTab $ml={63} $thin>Découp...</PanelTab>
                <PanelTab $ml={13} $muted $thin>
                  <svg width="14" height="10" viewBox="0 0 14 10" fill="none" stroke="#b0b0b0" strokeWidth="2">
                    <path d="M1 8l6-6 6 6" />
                  </svg>
                </PanelTab>
              </LeftTabs>
              <PagesBlock>
                <PagesTitle>
                  Pages
                  <PlusIcon />
                </PagesTitle>
                <PageRow>
                  <CheckSlot />
                  Page 1
                </PageRow>
                <PageRow>
                  <CheckSlot>
                    <svg width="18" height="14" viewBox="0 0 18 14" fill="none" stroke="#1e1e1e" strokeWidth="3">
                      <path d="M1 7l5 5L16 2" />
                    </svg>
                  </CheckSlot>
                  Découpage
                </PageRow>
              </PagesBlock>
              {layers.map((l, i) => (
                <LayerRow key={i} $depth={l.depth} $strong={l.strong}>
                  <LayerIcon>
                    {l.image ? <ImageIcon /> : <FrameIcon color={l.strong ? '#1e1e1e' : '#b3b3b3'} />}
                  </LayerIcon>
                  {l.name}
                </LayerRow>
              ))}
            </LeftPanel>

            <Canvas>
              <ScrollThumb />
              <Stack>
                <FrameSlot>
                  <FrameLabel $top={-30}>header-top</FrameLabel>
                  <HeaderTop $color="#8f4ff6" $h={201} $b={10} $bg="#fff">
                    <LogoBox $color="#abe1d0" $w={670} $h={173} $b={8}>
                      <Logo>ohmyfood</Logo>
                    </LogoBox>
                  </HeaderTop>
                </FrameSlot>
                <FrameSlot>
                  <FrameLabel>header-bottom</FrameLabel>
                  <HeaderBottom $color="#de3526" $h={146} $b={8} $bg="#e9e9e9">
                    <PinBox $color="#efdb4b" $w={104} $h={117} $b={6}>
                      <FaMapMarkerAlt size={50} />
                    </PinBox>
                    <CityBox $color="#000" $w={353} $h={117} $b={6}>Paris, Belleville</CityBox>
                  </HeaderBottom>
                </FrameSlot>
                <FrameSlot>
                  <FrameLabel>section</FrameLabel>
                  <SectionFrame $color="#7be241" $h={899} $b={10} $bg="#f8f8f8">
                    <Heading $color="#1e36c6" $h={210} $b={8}>
                      Réservez le menu qui
                      <br />
                      vous convient
                    </Heading>
                    <Lead $color="#de3526" $h={172} $b={8}>
                      Découvrez des restaurants d’exception,
                      <br />
                      sélectionnés par nos soins.
                    </Lead>
                    <CtaBox $color="#8f4ff6" $h={262} $b={8}>
                      <Cta>Explorer nos restaurants</Cta>
                    </CtaBox>
                  </SectionFrame>
                </FrameSlot>
                <FrameSlot $mt={38}>
                  <FrameLabel $left={2} $top={-28}>section</FrameLabel>
                  <NextFrame $color="#de3526" $h={120} $b={10} $bg="#f0f0f0" />
                </FrameSlot>
                <Selection>
                  <Handle $x="left" $y="top" />
                  <Handle $x="right" $y="top" />
                  <Handle $x="left" $y="bottom" />
                  <Handle $x="right" $y="bottom" />
                  <SizeBadge>448 × 480</SizeBadge>
                </Selection>
              </Stack>
            </Canvas>

            <RightPanel>
              <RightTabs>
                <span>Design</span>
                <PanelTab $ml={0} $muted>Prototype</PanelTab>
              </RightTabs>
              <Section>
                <AlignRow>
                  {alignPaths.map((a) => (
                    <AlignIcon key={a.axis} axis={a.axis} bars={a.bars} />
                  ))}
                  <Inline $gap={1}>
                    <AlignIcon axis="M2 2v24M26 2v24" bars="M14 9v10" />
                    <Chevron color="#b0b0b0" />
                  </Inline>
                </AlignRow>
              </Section>
              <Section>
                <PropRow $cols="48px 144px 47px 136px 48px">
                  <PropLabel>X</PropLabel>
                  <span>-538</span>
                  <PropLabel>Y</PropLabel>
                  <span>-480</span>
                </PropRow>
                <PropRow $cols="48px 144px 47px 136px 48px">
                  <PropLabel>W</PropLabel>
                  <span>448</span>
                  <PropLabel>H</PropLabel>
                  <span>480</span>
                  <Cell $bg="#f5f5f5">
                    <svg width="14" height="28" viewBox="0 0 14 28" fill="none" stroke="#1e1e1e" strokeWidth="2">
                      <path d="M2 11V6a5 5 0 0 1 10 0v5M2 17v5a5 5 0 0 0 10 0v-5M7 9v10" />
                    </svg>
                  </Cell>
                </PropRow>
                <PropRow $cols="48px 144px 47px 136px 48px">
                  <PropLabel>
                    <svg width="18" height="16" viewBox="0 0 18 16" fill="none" stroke="#8c8c8c" strokeWidth="1.600">
                      <path d="M1 0v15h16M1 6c4 1 7 4 8 9" />
                    </svg>
                  </PropLabel>
                  <span>0°</span>
                  <PropLabel>
                    <svg width="18" height="18" viewBox="0 0 18 18" fill="none" stroke="#8c8c8c" strokeWidth="1.600">
                      <path d="M1 18V9c0-5 3-8 8-8h9" />
                    </svg>
                  </PropLabel>
                  <span>0</span>
                  <Cell>
                    <svg width="24" height="24" viewBox="0 0 24 24" fill="none" stroke="#1e1e1e" strokeWidth="2">
                      <path d="M1 7V3a2 2 0 0 1 2-2h4M17 1h4a2 2 0 0 1 2 2v4M1 17v4a2 2 0 0 0 2 2h4M17 23h4a2 2 0 0 0 2-2v-4" />
                    </svg>
                  </Cell>
                </PropRow>
              </Section>
              <Section>
                <SectionTitle>Layer</SectionTitle>
                <PropRow $cols="48px 242px 85px 48px">
                  <PropLabel>
                    <svg width="16" height="18" viewBox="0 0 16 18" fill="none" stroke="#8c8c8c" strokeWidth="1.800">
                      <path d="M8 1l5 4.500a7 7 0 1 1-10 0z" />
                    </svg>
                  </PropLabel>
                  <Inline>
                    Pass through
                    <Chevron color="#b0b0b0" />
                  </Inline>
                  <span>100%</span>
                  <Cell><EyeIcon /></Cell>
                </PropRow>
              </Section>
              <Section>
                <SectionTitle>
                  Fill
                  <TitleIcons>
                    <Cell>
                      <svg width="18" height="18" viewBox="0 0 18 18" fill="#1e1e1e">
                        <circle cx="3.500" cy="3.500" r="2.800" />
                        <circle cx="14.500" cy="3.500" r="2.800" />
                        <circle cx="3.500" cy="14.500" r="2.800" />
                        <circle cx="14.500" cy="14.500" r="2.800" />
                      </svg>
                    </Cell>
                    <Cell><PlusIcon /></Cell>
                  </TitleIcons>
                </SectionTitle>
                <PropRow $cols="48px 146px 117px 48px 16px 48px">
                  <Thumb>
                    <ThumbBar $w={14} $color="#555" />
                    <ThumbBar $w={10} $color="#bbb" />
                    <ThumbBar $w={18} $color="#888" />
                    <ThumbBar $w={18} $color="#aaa" />
                    <ThumbBar $w={14} $h={3} $color="#a45fdc" />
                  </Thumb>
                  <span>Image</span>
                  <span>100%</span>
                  <Cell><EyeIcon /></Cell>
                  <span />
                  <Cell>
                    <svg width="22" height="2" viewBox="0 0 22 2" stroke="#1e1e1e" strokeWidth="2">
                      <path d="M0 1h22" />
                    </svg>
                  </Cell>
                </PropRow>
              </Section>
              {['Stroke', 'Effects', 'Export'].map((t) => (
                <Section key={t} $pad={false}>
                  <CollapsedTitle $muted>
                    {t}
                    <Cell><PlusIcon color="#8c8c8c" /></Cell>
                  </CollapsedTitle>
                </Section>
              ))}
              <HelpButton>?</HelpButton>
            </RightPanel>
          </Workspace>
          <WindowFade />
        </Window>

        <Dock>
          {dockApps.map((a, i) => (
            <DockItem key={i}>
              {a.el}
              {a.dot && <DockDot />}
              {a.badge && <DockBadge $left={a.badgeLeft ?? 50}>{a.badge}</DockBadge>}
            </DockItem>
          ))}
          <DockSeparator $ml={10} $mr={7} />
          <DockItem><Skype /><DockDot /></DockItem>
          <DockItem><TeamViewer /><DockDot /></DockItem>
          <DockItem><Acrobat /><DockDot /></DockItem>
          <DockSeparator $ml={12} $mr={58} />
          <DockItem $w={32} $mt={53}>
            <Finder w={32} h={29} id="fnd2" />
          </DockItem>
          <DockItem $w={69} $mt={-7} $ml={-3}>
            <Trash />
          </DockItem>
        </Dock>
      </Desktop>
    </>
  );
}
